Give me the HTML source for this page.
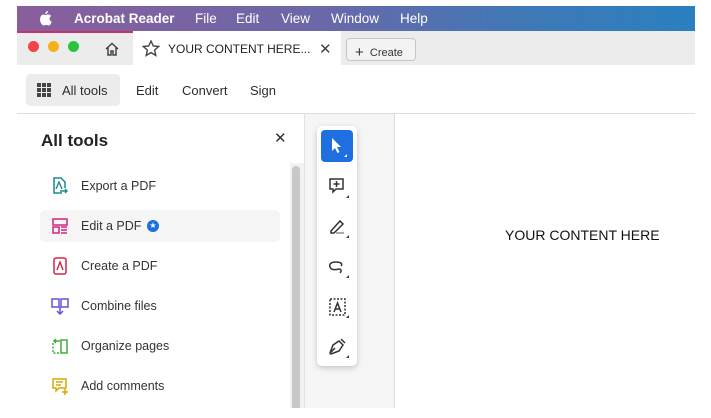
<!DOCTYPE html>
<html><head><meta charset="utf-8"><style>
*{margin:0;padding:0;box-sizing:border-box}
body{width:711px;height:418px;background:#fff;font-family:"Liberation Sans",sans-serif;position:relative;overflow:hidden;color:#2c2c2c}
.abs{position:absolute}
.menu{left:17px;top:6px;width:678px;height:25px;background:linear-gradient(90deg,#8a5e9c 0%,#6a68a8 45%,#3f78b6 75%,#2a80bf 100%);color:#fff;font-size:13.5px}
.menu span{position:absolute;top:5px}
.tabbar{left:17px;top:31px;width:678px;height:34px;background:#ececec}
.tab{left:133px;top:31px;width:208px;height:34px;background:#fff}
.dot{width:11px;height:11px;border-radius:50%;top:41px}
.tool{left:17px;top:65px;width:678px;height:49px;border-bottom:1px solid #ddd;font-size:13px}
.item{position:absolute;left:81px;font-size:12.5px;color:#333}
.ic{position:absolute;left:51px;width:18px;height:18px}
</style></head><body>
<div class="abs menu">
<svg class="abs" style="left:22px;top:5px" width="13" height="15" viewBox="0 0 13 15"><path d="M9 0c0 1.5-1.2 3-2.7 3C6.2 1.5 7.5 0 9 0zM6.5 4c1 0 1.8-.6 2.7-.6 1.2 0 2.3.7 2.9 1.7-2.4 1.300-2 4.7.6 5.6-.5 1.5-1.6 3.8-3 3.8-.9 0-1.300-.6-2.4-.6s-1.6.6-2.4.6C3.1 14.5 1 11.4 1 8.4 1 5.6 2.8 3.5 4.6 3.5 5.3 3.5 6 4 6.5 4z" fill="#fff"/></svg>
<span style="left:57px;font-weight:bold">Acrobat Reader</span>
<span style="left:178px">File</span><span style="left:219px">Edit</span><span style="left:264px">View</span><span style="left:314px">Window</span><span style="left:383px">Help</span>
</div>
<div class="abs tabbar"></div>
<div class="abs" style="left:17px;top:31px;width:290px;height:2px;background:#c8326a"></div>
<div class="abs tab"></div>
<div class="abs dot" style="left:28px;background:#f2434b"></div>
<div class="abs dot" style="left:48px;background:#f5b01c"></div>
<div class="abs dot" style="left:68px;background:#2bc43f"></div>
<svg class="abs" style="left:104px;top:42px" width="16" height="14" viewBox="0 0 16 14"><path d="M2 7L8 1.5 14 7M4 5.5V13h3V9h2v4h3V5.5" fill="none" stroke="#444" stroke-width="1.5"/></svg>
<svg class="abs" style="left:142px;top:40px" width="18" height="17" viewBox="0 0 18 17"><path d="M9 1l2.3 5 5.4.5-4.1 3.6 1.2 5.3L9 12.6 4.2 15.4l1.2-5.3L1.3 6.5l5.4-.5z" fill="none" stroke="#444" stroke-width="1.4"/></svg>
<div class="abs" style="left:168px;top:42px;font-size:12px;color:#222">YOUR CONTENT HERE...</div>
<div class="abs" style="left:319px;top:40px;font-size:15px;color:#444">✕</div>
<div class="abs" style="left:346px;top:38px;width:70px;height:23px;border:1px solid #c6c6c6;border-radius:4px;background:#f3f3f3;font-size:11px;color:#333;padding:4px 0 0 8px"><span style="font-size:15px;position:relative;top:1px">+</span>&nbsp; Create</div>
<div class="abs tool"></div>
<div class="abs" style="left:26px;top:74px;width:94px;height:32px;background:#ececec;border-radius:4px"></div>
<svg class="abs" style="left:37px;top:83px" width="14" height="14" viewBox="0 0 14 14" fill="#444"><rect x="0" y="0" width="4" height="4"/><rect x="5" y="0" width="4" height="4"/><rect x="10" y="0" width="4" height="4"/><rect x="0" y="5" width="4" height="4"/><rect x="5" y="5" width="4" height="4"/><rect x="10" y="5" width="4" height="4"/><rect x="0" y="10" width="4" height="4"/><rect x="5" y="10" width="4" height="4"/><rect x="10" y="10" width="4" height="4"/></svg>
<div class="abs" style="left:62px;top:83px;font-size:13px">All tools</div>
<div class="abs" style="left:136px;top:83px;font-size:13px">Edit</div>
<div class="abs" style="left:182px;top:83px;font-size:13px">Convert</div>
<div class="abs" style="left:250px;top:83px;font-size:13px">Sign</div>
<div class="abs" style="left:41px;top:131px;font-size:17px;font-weight:bold;color:#222">All tools</div>
<div class="abs" style="left:274px;top:129px;font-size:15px;color:#333">✕</div>
<div class="abs" style="left:290px;top:163px;width:14px;height:245px;background:#f2f2f2"></div>
<div class="abs" style="left:292px;top:166px;width:8px;height:242px;background:#c8c8c8;border-radius:4px 4px 0 0"></div>
<div class="abs" style="left:304px;top:114px;width:91px;height:294px;background:#f5f5f5;border-left:1px solid #e2e2e2;border-right:1px solid #dcdcdc"></div>
<div class="abs" style="left:40px;top:210px;width:240px;height:32px;background:#f5f5f5;border-radius:5px"></div>
<svg class="ic" style="top:177px" viewBox="0 0 18 18"><path d="M11 16H3V1h7l4 4v6" fill="none" stroke="#1a8a8a" stroke-width="1.5"/><path d="M5 12l3-7 3 7M9 14h7m-2-2l2 2-2 2" fill="none" stroke="#1a8a8a" stroke-width="1.4"/></svg>
<div class="item" style="top:179px">Export a PDF</div>
<svg class="ic" style="top:217px" viewBox="0 0 18 18" fill="none" stroke="#d4247a" stroke-width="1.5"><rect x="2" y="2" width="14" height="6"/><rect x="2" y="10" width="6" height="6"/><path d="M10 10h6M10 13h6M10 16h6"/></svg>
<div class="item" style="top:219px">Edit a PDF</div>
<div class="abs" style="left:147px;top:220px;width:12px;height:12px;border-radius:50%;background:#1e6fde;color:#fff;font-size:8px;text-align:center;line-height:12px">★</div>
<svg class="ic" style="top:257px" viewBox="0 0 18 18"><rect x="3" y="1" width="12" height="16" rx="2" fill="none" stroke="#d4244a" stroke-width="1.5"/><path d="M6 13l3-8 3 8" fill="none" stroke="#d4244a" stroke-width="1.4"/></svg>
<div class="item" style="top:259px">Create a PDF</div>
<svg class="ic" style="top:297px" viewBox="0 0 18 18" fill="none" stroke="#6a4fd6" stroke-width="1.5"><rect x="1" y="2" width="7" height="8"/><rect x="10" y="2" width="7" height="8"/><path d="M9 10v7m-3-3l3 3 3-3"/></svg>
<div class="item" style="top:299px">Combine files</div>
<svg class="ic" style="top:337px" viewBox="0 0 18 18" fill="none" stroke="#3fae3a" stroke-width="1.5"><rect x="10" y="3" width="6" height="13"/><path d="M2 6v10h6" stroke-dasharray="2 1.5"/><path d="M4 4h5M5 2L3 4l2 2"/></svg>
<div class="item" style="top:339px">Organize pages</div>
<svg class="ic" style="top:377px" viewBox="0 0 18 18" fill="none" stroke="#d9a800" stroke-width="1.5"><path d="M2 2h13v9H8l-3 3v-3H2z"/><path d="M5 5h7M5 8h5M14 12v6M11 15h6"/></svg>
<div class="item" style="top:379px">Add comments</div>
<div class="abs" style="left:317px;top:126px;width:40px;height:240px;background:#fff;border-radius:5px;box-shadow:0 2px 6px rgba(0,0,0,.2)"></div>
<div class="abs" style="left:321px;top:130px;width:32px;height:32px;background:#1f6fe0;border-radius:4px"></div>
<svg class="abs" style="left:330px;top:137px" width="18" height="20" viewBox="0 0 18 20"><path d="M2 1v13l3-3 2.5 5 2-1-2.5-5h4z" fill="#fff"/><path d="M17 17v3h-3z" fill="#fff"/></svg>
<svg class="abs" style="left:328px;top:177px" width="22" height="22" viewBox="0 0 22 22" fill="none" stroke="#333" stroke-width="1.5"><path d="M2 2h13v10H8l-3 3v-3H2z"/><path d="M8.5 4v6M5.5 7h6"/><path d="M21 18v3h-3z" fill="#333" stroke="none"/></svg>
<svg class="abs" style="left:328px;top:217px" width="22" height="22" viewBox="0 0 22 22" fill="none" stroke="#333" stroke-width="1.5"><path d="M3 14L12 4l3 3-9 9H3z"/><path d="M8 16h8" stroke="#aaa" stroke-width="2"/><path d="M21 18v3h-3z" fill="#333" stroke="none"/></svg>
<svg class="abs" style="left:328px;top:257px" width="22" height="22" viewBox="0 0 22 22" fill="none" stroke="#333" stroke-width="1.5"><path d="M13 9c2-2 0-4-5-4S1 7 2 10s5 3 9 2c2 0 3 2 1 4"/><path d="M21 18v3h-3z" fill="#333" stroke="none"/></svg>
<svg class="abs" style="left:328px;top:297px" width="22" height="22" viewBox="0 0 22 22" fill="none" stroke="#333" stroke-width="1.5"><rect x="2" y="2" width="15" height="16" stroke-dasharray="2 1.5"/><path d="M6 15l3.5-9 3.5 9M7.5 12h4"/><path d="M21 18v3h-3z" fill="#333" stroke="none"/></svg>
<svg class="abs" style="left:328px;top:337px" width="22" height="22" viewBox="0 0 22 22" fill="none" stroke="#333" stroke-width="1.5"><path d="M2 16l3-8 6-4 4 4-4 6-8 3zM2 16l5-5M13 2l4 4"/><path d="M21 18v3h-3z" fill="#333" stroke="none"/></svg>
<div class="abs" style="left:505px;top:227px;font-size:14px;color:#111">YOUR CONTENT HERE</div>
</body></html>
